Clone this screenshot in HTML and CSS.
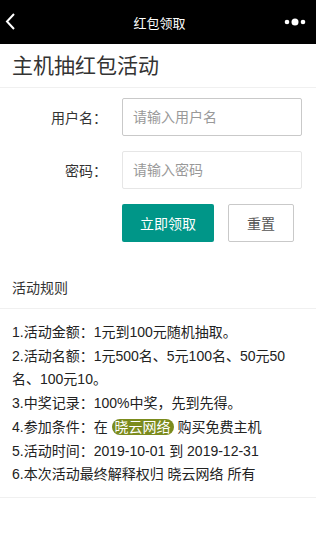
FILE: index.html
```html
<!DOCTYPE html>
<html lang="zh-CN">
<head>
    <meta charset="UTF-8">
    <meta name="viewport" content="width=device-width, initial-scale=1.0">
    <title>红包领取</title>
    <link rel="stylesheet" href="styles.css">
</head>
<body>
    <header class="topbar">
        <a class="topbar-back" href="#">
            <svg width="12" height="20" viewBox="0 0 12 20"><path d="M9 2 L2 9.5 L9 17" fill="none" stroke="#fff" stroke-width="2"/></svg>
        </a>
        <div class="topbar-title">红包领取</div>
        <span class="topbar-more">
            <svg width="24" height="10" viewBox="0 0 24 10"><circle cx="4" cy="5" r="2.3" fill="#fff"/><circle cx="12" cy="5" r="3.5" fill="#fff"/><circle cx="20" cy="5" r="2.3" fill="#fff"/></svg>
        </span>
    </header>

    <div class="page-title">主机抽红包活动</div>

    <form class="form" onsubmit="return false">
        <div class="form-item">
            <label class="form-label">用户名：</label>
            <div class="input-block"><input class="input input-active" type="text" placeholder="请输入用户名" autofocus></div>
        </div>
        <div class="form-item">
            <label class="form-label">密码：</label>
            <div class="input-block"><input class="input" type="password" placeholder="请输入密码"></div>
        </div>
        <div class="form-item">
            <div class="input-block buttons">
                <button class="btn" type="submit">立即领取</button>
                <button class="btn btn-plain" type="reset">重置</button>
            </div>
        </div>
    </form>

    <div class="card">
        <div class="card-header">活动规则</div>
        <div class="card-body">
            <p>1.活动金额：1元到100元随机抽取。</p>
            <p>2.活动名额：1元500名、5元100名、50元50名、100元10。</p>
            <p>3.中奖记录：100%中奖，先到先得。</p>
            <p>4.参加条件：在 <span class="badge">晓云网络</span> 购买免费主机</p>
            <p>5.活动时间：2019-10-01 到 2019-12-31</p>
            <p>6.本次活动最终解释权归 晓云网络 所有</p>
        </div>
    </div>
</body>
</html>
```

FILE: styles.css
```css
body {
    margin: 0;
    background: #fff;
    color: #333;
    font-family: "Liberation Sans", "Noto Sans CJK SC", sans-serif;
    font-size: 14px;
}
.topbar {
    height: 44px;
    background: #000;
    color: #fff;
    display: flex;
    align-items: center;
    justify-content: space-between;
    padding: 0 9px 0 5px;
}
.topbar-back {
    display: flex;
    width: 24px;
}
.topbar-title {
    font-size: 13px;
    margin-left: 7px;
}
.topbar-more {
    display: flex;
    width: 24px;
}
.page-title {
    font-size: 21px;
    height: 43px;
    line-height: 44px;
    padding: 0 12px;
    border-bottom: 1px solid #f0f0f0;
}
.form {
    padding: 10px 14px 0 12px;
}
.form-item {
    display: flex;
    align-items: center;
    margin-bottom: 15px;
}
.form-label {
    width: 95px;
    padding-right: 15px;
    text-align: right;
    color: #333;
}
.input-block {
    flex: 1;
}
.input {
    box-sizing: border-box;
    width: 100%;
    height: 38px;
    padding: 0 10px;
    border: 1px solid #e6e6e6;
    border-radius: 2px;
    font-family: inherit;
    font-size: 14px;
    color: #333;
    outline: none;
    display: block;
}
.input::placeholder {
    color: #999;
}
.input-active, .input:focus {
    border-color: #c9c9c9;
}
.buttons {
    margin-left: 110px;
    display: flex;
    gap: 14px;
}
.btn {
    height: 38px;
    padding: 0 18px;
    border: none;
    border-radius: 2px;
    background: #009688;
    color: #fff;
    font-family: inherit;
    font-size: 14px;
    cursor: pointer;
}
.btn-plain {
    background: #fff;
    border: 1px solid #c9c9c9;
    color: #555;
}
.card {
    margin-top: 25px;
    border-bottom: 1px solid #f0f0f0;
}
.card-header {
    height: 41px;
    line-height: 42px;
    padding: 0 12px;
    border-bottom: 1px solid #f0f0f0;
}
.card-body {
    padding: 12px 18px 10px 12px;
    color: #222;
    line-height: 23.7px;
}
.card-body p {
    margin: 0;
}
.badge {
    display: inline-block;
    background: #7b8b1d;
    color: #fff;
    padding: 0 3px;
    line-height: 16px;
    border-radius: 8px;
}
```
